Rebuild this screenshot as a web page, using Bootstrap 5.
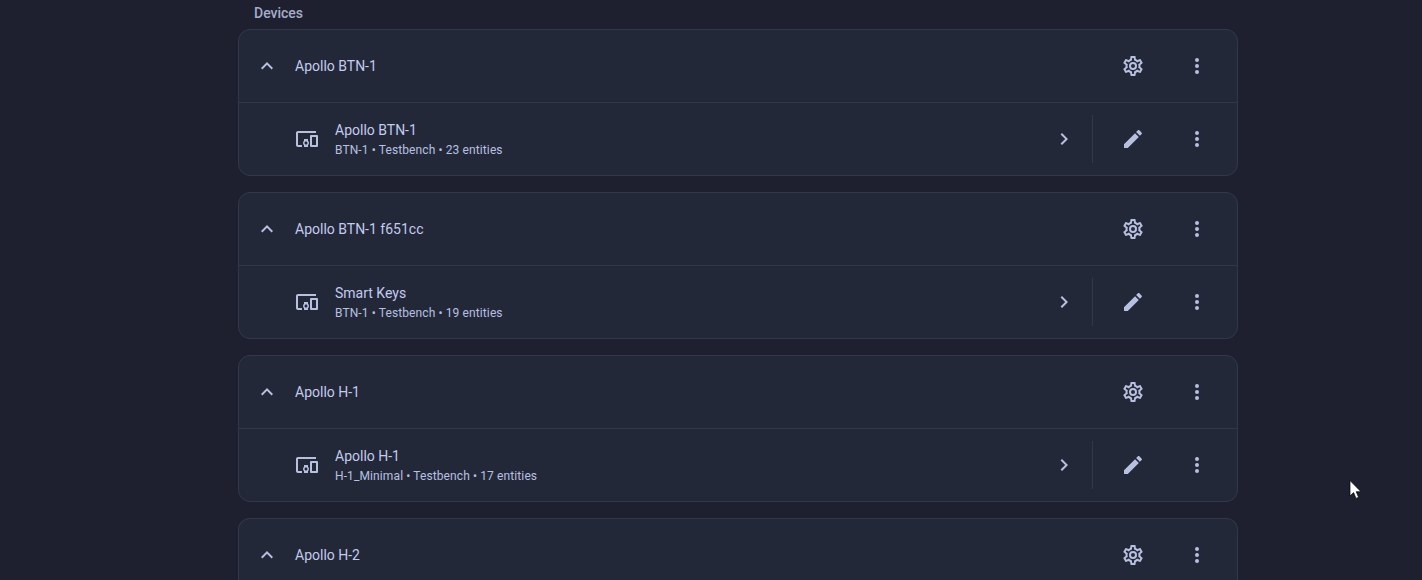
<!DOCTYPE html>
<html lang="en">
<head>
    <meta charset="UTF-8">
    <meta name="viewport" content="width=device-width, initial-scale=1">
    <title>Devices</title>
    <link href="https://cdn.jsdelivr.net/npm/bootstrap@5.3.0/dist/css/bootstrap.min.css" rel="stylesheet">
    <style>
        html, body { height: 580px; overflow: hidden; }
        body { background: #1e2030; font-family: Roboto, "Liberation Sans", sans-serif; color: #c3cbee; }
        .page-wrap { width: 1000px; margin-left: 238px; }
        .section-title { height: 29px; padding: 5px 16px 0; font-size: 14px; line-height: 16px; font-weight: 500; color: #a5adcb; }
        .group-card { --bs-card-bg: #232839; --bs-card-border-color: #32374b; --bs-card-border-radius: 12px; --bs-card-inner-border-radius: 11px; margin-bottom: 16px; height: 147px; overflow: hidden; }
        .group-card.cut-off { height: 62px; margin-bottom: 0; border-bottom: 0; border-bottom-left-radius: 0; border-bottom-right-radius: 0; }
        .group-head { height: 73px; flex-shrink: 0; padding: 0 8px 0 16px; border-bottom: 1px solid #32374b; }
        .group-row { height: 72px; padding: 0 8px 0 56px; }
        .head-name { margin-left: 16px; font-size: 14px; }
        .chev { width: 24px; height: 24px; }
        .row-icon { width: 24px; height: 24px; margin-right: 16px; }
        .row-text { padding-top: 2px; }
        .row-name { font-size: 14px; line-height: 20px; }
        .row-sub { font-size: 12px; line-height: 20px; letter-spacing: .11px; color: #b8c0e0; }
        .icon-slot { width: 64px; height: 48px; }
        .ico { width: 24px; height: 24px; fill: #b8c0e0; display: block; }
        .row-divider { width: 1px; height: 48px; background: #32374b; margin: 0 8px 0 16px; }
        .mouse-cursor { position: absolute; left: 1349px; top: 480px; width: 13px; height: 20px; }
    </style>
</head>
<body>
<svg width="0" height="0" class="d-block">
    <symbol id="i-up" viewBox="0 0 24 24"><path d="M7.41,15.41L12,10.83L16.59,15.41L18,14L12,8L6,14L7.41,15.41Z"/></symbol>
    <symbol id="i-right" viewBox="0 0 24 24"><path d="M8.59,16.58L13.17,12L8.59,7.41L10,6L16,12L10,18L8.59,16.58Z"/></symbol>
    <symbol id="i-dots" viewBox="0 0 24 24"><path d="M12,16A2,2 0 0,1 14,18A2,2 0 0,1 12,20A2,2 0 0,1 10,18A2,2 0 0,1 12,16M12,10A2,2 0 0,1 14,12A2,2 0 0,1 12,14A2,2 0 0,1 10,12A2,2 0 0,1 12,10M12,4A2,2 0 0,1 14,6A2,2 0 0,1 12,8A2,2 0 0,1 10,6A2,2 0 0,1 12,4Z"/></symbol>
    <symbol id="i-pencil" viewBox="0 0 24 24"><path d="M20.71,7.04C21.1,6.65 21.1,6 20.71,5.63L18.37,3.29C18,2.9 17.35,2.9 16.96,3.29L15.12,5.12L18.87,8.87M3,17.25V21H6.75L17.81,9.93L14.06,6.18L3,17.25Z"/></symbol>
    <symbol id="i-cog" viewBox="0 0 24 24"><path d="M12,8A4,4 0 0,1 16,12A4,4 0 0,1 12,16A4,4 0 0,1 8,12A4,4 0 0,1 12,8M12,10A2,2 0 0,0 10,12A2,2 0 0,0 12,14A2,2 0 0,0 14,12A2,2 0 0,0 12,10M10,22C9.75,22 9.54,21.82 9.5,21.58L9.13,18.93C8.5,18.68 7.96,18.34 7.44,17.94L4.95,18.95C4.73,19.03 4.46,18.95 4.34,18.73L2.34,15.27C2.21,15.05 2.27,14.78 2.46,14.63L4.57,12.97L4.5,12L4.57,11L2.46,9.37C2.27,9.22 2.21,8.95 2.34,8.73L4.34,5.27C4.46,5.05 4.73,4.96 4.95,5.05L7.44,6.05C7.96,5.66 8.5,5.32 9.13,5.07L9.5,2.42C9.54,2.18 9.75,2 10,2H14C14.25,2 14.46,2.18 14.5,2.42L14.87,5.07C15.5,5.32 16.04,5.66 16.56,6.05L19.05,5.05C19.27,4.96 19.54,5.05 19.66,5.27L21.66,8.73C21.79,8.95 21.73,9.22 21.54,9.37L19.43,11L19.5,12L19.43,13L21.54,14.63C21.73,14.78 21.79,15.05 21.66,15.27L19.66,18.73C19.54,18.95 19.27,19.04 19.05,18.95L16.56,17.95C16.04,18.34 15.5,18.68 14.87,18.93L14.5,21.58C14.46,21.82 14.25,22 14,22H10M11.25,4L10.88,6.61C9.68,6.86 8.62,7.5 7.85,8.39L5.44,7.35L4.69,8.65L6.8,10.2C6.4,11.37 6.4,12.64 6.8,13.8L4.68,15.36L5.43,16.66L7.86,15.62C8.63,16.5 9.68,17.14 10.87,17.38L11.24,20H12.76L13.13,17.39C14.32,17.14 15.37,16.5 16.14,15.62L18.57,16.66L19.32,15.36L17.2,13.81C17.6,12.64 17.6,11.37 17.2,10.2L19.31,8.65L18.56,7.35L16.15,8.39C15.38,7.5 14.32,6.86 13.12,6.62L12.75,4H11.25Z"/></symbol>
    <symbol id="i-devices" viewBox="0 0 24 24"><path d="M3 6H21V4H3C1.9 4 1 4.9 1 6V18C1 19.1 1.9 20 3 20H7V18H3V6M13 12H9V13.78C8.39 14.33 8 15.11 8 16C8 16.89 8.39 17.67 9 18.22V20H13V18.22C13.61 17.67 14 16.88 14 16S13.61 14.33 13 13.78V12M11 17.5C10.17 17.5 9.5 16.83 9.5 16S10.17 14.5 11 14.5 12.5 15.17 12.5 16 11.83 17.5 11 17.5M22 8H16C15.5 8 15 8.5 15 9V19C15 19.5 15.5 20 16 20H22C22.5 20 23 19.5 23 19V9C23 8.5 22.5 8 22 8M21 18H17V10H21V18Z"/></symbol>
</svg>

<div class="page-wrap">
    <div class="section-title">Devices</div>
    <div id="groups"></div>
</div>

<!-- mouse pointer from the screenshot -->
<svg class="mouse-cursor" viewBox="0 0 13 20">
    <path d="M1 0.5V16L4.6 12.6L7 18.4L9.6 17.3L7.2 11.7H12Z" fill="#fff" stroke="#000" stroke-width=".7"/>
</svg>

<script src="https://cdn.jsdelivr.net/npm/bootstrap@5.3.0/dist/js/bootstrap.bundle.min.js"></script>
<script>
    // last group runs off the bottom of the window, only its header shows
    const groups = [
        { name: 'Apollo BTN-1', device: 'Apollo BTN-1', sub: 'BTN-1 • Testbench • 23 entities' },
        { name: 'Apollo BTN-1 f651cc', device: 'Smart Keys', sub: 'BTN-1 • Testbench • 19 entities' },
        { name: 'Apollo H-1', device: 'Apollo H-1', sub: 'H-1_Minimal • Testbench • 17 entities' },
        { name: 'Apollo H-2' }
    ];

    function icon(id) {
        return `<svg class="ico"><use href="#${id}"/></svg>`;
    }

    const slot = id => `<div class="icon-slot d-flex align-items-center justify-content-center">${icon(id)}</div>`;

    document.getElementById('groups').innerHTML = groups.map(g => `
        <div class="card group-card ${g.device ? '' : 'cut-off'}">
            <div class="group-head d-flex align-items-center">
                <div class="chev">${icon('i-up')}</div>
                <div class="head-name flex-grow-1">${g.name}</div>
                ${slot('i-cog')}${slot('i-dots')}
            </div>
            ${g.device ? `<div class="group-row d-flex align-items-center">
                <div class="row-icon">${icon('i-devices')}</div>
                <div class="row-text flex-grow-1">
                    <div class="row-name">${g.device}</div>
                    <div class="row-sub">${g.sub}</div>
                </div>
                <div class="chev">${icon('i-right')}</div>
                <div class="row-divider"></div>
                ${slot('i-pencil')}${slot('i-dots')}
            </div>` : ''}
        </div>`).join('');
</script>
</body>
</html>
